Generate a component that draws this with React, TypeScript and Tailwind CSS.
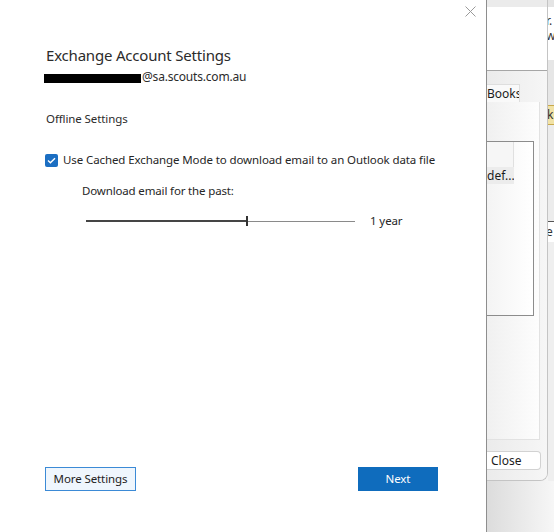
import React from "react";

function CloseX() {
  return (
    <svg width="11" height="11" viewBox="0 0 11 11" className="block">
      <path d="M0.5 0.5 L10.5 10.5 M10.5 0.5 L0.5 10.5" stroke="#9a9a9a" strokeWidth="1" fill="none" />
    </svg>
  );
}

function Check() {
  return (
    <div className="w-[13px] h-[13px] rounded-[2px] bg-[#1b6ec2] flex items-center justify-center">
      <svg width="9" height="7" viewBox="0 0 9 7" className="block">
        <path d="M1 3.6 L3.4 5.8 L8 1.2" stroke="#ffffff" strokeWidth="1.4" fill="none" />
      </svg>
    </div>
  );
}

export default function App() {
  return (
    <div className="w-[554px] h-[532px] flex overflow-hidden bg-white font-['Segoe_UI','Noto_Sans',sans-serif] text-[#262626]">
      {/* Main dialog */}
      <div className="w-[487px] h-full shrink-0 bg-white border-r border-[#8e8e8e] flex flex-col">
        <div className="flex justify-end pr-[10px] pt-[6px] h-[17px]">
          <CloseX />
        </div>
        <div className="pl-[46px] mt-[27px] text-[15px] leading-[22px] tracking-[-0.2px] text-[#2b2b2b]">
          Exchange Account Settings
        </div>
        <div className="pl-[44px] mt-[2px] h-[18px] flex items-center">
          <div className="w-[97px] h-[9px] bg-black mt-[2px]" />
          <span className="ml-[1px] text-[12px] leading-[18px] tracking-[-0.2px] text-[#2b2b2b]">@sa.scouts.com.au</span>
        </div>
        <div className="pl-[46px] mt-[24px] text-[11.5px] leading-[18px] tracking-[-0.1px] text-[#2b2b2b]">
          Offline Settings
        </div>
        <div className="pl-[45px] mt-[23px] flex items-center h-[18px]">
          <Check />
          <span className="ml-[5px] text-[11.5px] leading-[18px] tracking-[-0.1px] text-[#262626]">
            Use Cached Exchange Mode to download email to an Outlook data file
          </span>
        </div>
        <div className="pl-[82px] mt-[13px] text-[11.5px] leading-[18px] tracking-[-0.15px] text-[#262626]">
          Download email for the past:
        </div>
        <div className="pl-[86px] mt-[12px] flex items-center h-[18px]">
          <div className="w-[160px] h-[2px] bg-[#454545]" />
          <div className="w-[2px] h-[10px] bg-[#333333]" />
          <div className="w-[107px] h-[1px] bg-[#8a8a8a]" />
          <span className="ml-[15px] text-[11.5px] leading-[18px] tracking-[-0.1px] text-[#262626]">1 year</span>
        </div>
        <div className="mt-auto mb-[41px] pl-[45px] pr-[48px] flex justify-between">
          <button className="w-[91px] h-[24px] border border-[#3b8ad6] bg-[#eff6fd] text-[11.5px] tracking-[-0.1px] text-[#222222] flex items-center justify-center">
            More Settings
          </button>
          <button className="w-[80px] h-[24px] bg-[#0f6cbd] text-[11.5px] tracking-[-0.1px] text-white flex items-center justify-center">
            Next
          </button>
        </div>
      </div>

      {/* Background window (partially visible) */}
      <div className="flex-1 h-full flex flex-col bg-gradient-to-r from-[#dcdcdc] to-[#f7f7f7]">
        <div className="h-[481px] flex">
          <div className="w-[61px] h-full flex flex-col bg-[#f1f1f1] border-r border-b border-[#c4c4c4] rounded-br-[8px] overflow-hidden">
            <div className="h-[7px] bg-[#ebebeb]" />
            <div className="h-[63px] bg-white" />
            <div className="h-[1px] bg-[#a6a6a6]" />
            <div className="pt-[13px] flex-1 flex flex-col bg-gradient-to-r from-[#ebebeb] to-[#f6f6f6]">
              <div className="w-[33px] h-[18px] bg-[#f9f9f9] border border-l-0 border-b-0 border-[#dedede] text-[12px] leading-[17px] text-[#1c1c1c] overflow-hidden whitespace-nowrap">
                Books
              </div>
              <div className="w-[53px] h-[338px] bg-gradient-to-r from-[#f0f0f0] to-[#fdfdfd] border-r border-b border-[#e2e2e2] pt-[39px]">
                <div className="w-[47px] h-[175px] border border-l-0 border-[#8c8c8c] bg-gradient-to-r from-[#f4f4f4] to-white flex flex-col">
                  <div className="w-[27px] h-[25px] border-r border-[#e0e0e0] bg-[#f6f6f6]" />
                  <div className="w-[27px] h-[17px] bg-[#ececec] text-[12px] leading-[17px] text-[#1c1c1c] overflow-hidden whitespace-nowrap">
                    def...
                  </div>
                </div>
              </div>
              <div className="mt-[11px] w-[54px] h-[19px] bg-white border border-l-0 border-[#d2d2d2] rounded-r-[4px] text-[12px] leading-[17px] text-[#1c1c1c] pl-[4px]">
                Close
              </div>
            </div>
          </div>
          <div className="flex-1 flex flex-col overflow-hidden">
            <div className="h-[7px] bg-[#e4e4e4]" />
            <div className="h-[53px] bg-white text-[12px] leading-[15px] text-[#333] whitespace-nowrap pt-[6px] -ml-[2px]">
              r.<br />w
            </div>
            <div className="h-[45px] bg-[#e6e6e6]" />
            <div className="h-[20px] bg-[#f1e2a6] border-y border-[#c9a94a] text-[12px] leading-[18px] text-[#333] -ml-[1px] whitespace-nowrap">k</div>
            <div className="h-[96px] bg-[#ececec]" />
            <div className="h-[1px] bg-[#555]" />
            <div className="h-[20px] bg-white text-[12px] leading-[20px] text-[#333] -ml-[2px] whitespace-nowrap">e</div>
            <div className="flex-1 bg-[#efefef]" />
          </div>
        </div>
        <div className="flex-1" />
      </div>
    </div>
  );
}
